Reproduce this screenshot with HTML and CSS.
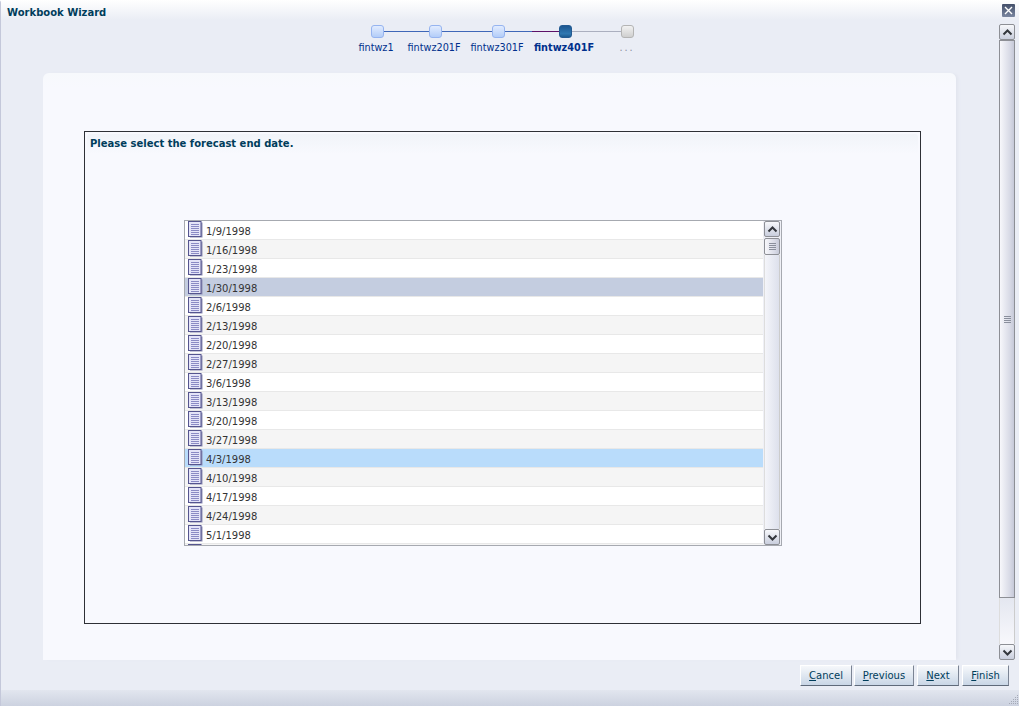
FILE: index.html
```html
<!DOCTYPE html>
<html lang="en">
<head>
<meta charset="utf-8">
<title>Workbook Wizard</title>
<link rel="stylesheet" href="styles.css">
</head>
<body>
<div class="dialog">
  <header class="titlebar">
    <h1 class="title">Workbook Wizard</h1>
    <button class="close" aria-label="Close">
      <svg width="13" height="13" viewBox="0 0 13 13"><path d="M3 3l7 7M10 3l-7 7" stroke="#fff" stroke-width="1.4" fill="none"/></svg>
    </button>
  </header>
  <div class="middle">
    <main class="content">
      <nav class="train">
        <div class="track">
          <span class="stop done"></span><span class="line l1 blue"></span>
          <span class="stop done"></span><span class="line l2 blue"></span>
          <span class="stop done"></span><span class="line l3 mixed"></span>
          <span class="stop current"></span><span class="line l4 grey"></span>
          <span class="stop todo"></span>
        </div>
        <div class="labels">
          <span class="label">fintwz1</span>
          <span class="label">fintwz201F</span>
          <span class="label">fintwz301F</span>
          <span class="label active">fintwz401F</span>
          <span class="label muted">...</span>
        </div>
      </nav>
      <section class="card">
        <div class="panel">
          <div class="prompt">Please select the forecast end date.</div>
          <div class="listbox">
            <ul class="rows">
              <li class="row"><svg class="doc" viewBox="0 0 15 17"><use href="#doc"/></svg>1/9/1998</li>
              <li class="row alt"><svg class="doc" viewBox="0 0 15 17"><use href="#doc"/></svg>1/16/1998</li>
              <li class="row"><svg class="doc" viewBox="0 0 15 17"><use href="#doc"/></svg>1/23/1998</li>
              <li class="row hover"><svg class="doc" viewBox="0 0 15 17"><use href="#doc"/></svg>1/30/1998</li>
              <li class="row"><svg class="doc" viewBox="0 0 15 17"><use href="#doc"/></svg>2/6/1998</li>
              <li class="row alt"><svg class="doc" viewBox="0 0 15 17"><use href="#doc"/></svg>2/13/1998</li>
              <li class="row"><svg class="doc" viewBox="0 0 15 17"><use href="#doc"/></svg>2/20/1998</li>
              <li class="row alt"><svg class="doc" viewBox="0 0 15 17"><use href="#doc"/></svg>2/27/1998</li>
              <li class="row"><svg class="doc" viewBox="0 0 15 17"><use href="#doc"/></svg>3/6/1998</li>
              <li class="row alt"><svg class="doc" viewBox="0 0 15 17"><use href="#doc"/></svg>3/13/1998</li>
              <li class="row"><svg class="doc" viewBox="0 0 15 17"><use href="#doc"/></svg>3/20/1998</li>
              <li class="row alt"><svg class="doc" viewBox="0 0 15 17"><use href="#doc"/></svg>3/27/1998</li>
              <li class="row selected"><svg class="doc" viewBox="0 0 15 17"><use href="#doc"/></svg>4/3/1998</li>
              <li class="row alt"><svg class="doc" viewBox="0 0 15 17"><use href="#doc"/></svg>4/10/1998</li>
              <li class="row"><svg class="doc" viewBox="0 0 15 17"><use href="#doc"/></svg>4/17/1998</li>
              <li class="row alt"><svg class="doc" viewBox="0 0 15 17"><use href="#doc"/></svg>4/24/1998</li>
              <li class="row"><svg class="doc" viewBox="0 0 15 17"><use href="#doc"/></svg>5/1/1998</li>
              <li class="row alt"><svg class="doc" viewBox="0 0 15 17"><use href="#doc"/></svg></li>
            </ul>
            <div class="sb small">
              <span class="sb-btn"><svg width="15" height="15" viewBox="0 0 15 15"><use href="#up"/></svg></span>
              <span class="sb-thumb mini"><svg width="11" height="11" viewBox="0 0 11 11"><use href="#grip"/></svg></span>
              <span class="sb-rest"></span>
              <span class="sb-btn"><svg width="15" height="15" viewBox="0 0 15 15"><use href="#down"/></svg></span>
            </div>
          </div>
        </div>
      </section>
    </main>
    <div class="sb page">
      <span class="sb-btn"><svg width="15" height="15" viewBox="0 0 15 15"><use href="#up"/></svg></span>
      <span class="sb-thumb big"><svg width="11" height="11" viewBox="0 0 11 11"><use href="#grip"/></svg></span>
      <span class="sb-rest"></span>
      <span class="sb-btn"><svg width="15" height="15" viewBox="0 0 15 15"><use href="#down"/></svg></span>
    </div>
  </div>
  <footer class="buttons">
    <button class="btn cancel"><u>C</u>ancel</button>
    <button class="btn previous"><u>P</u>revious</button>
    <button class="btn next"><u>N</u>ext</button>
    <button class="btn finish"><u>F</u>inish</button>
  </footer>
  <div class="statusbar">
    <svg width="12" height="12" viewBox="0 0 12 12" fill="#a4a9b6"><path d="M10 1h1v1h-1zM8 3h1v1H8zM10 3h1v1h-1zM6 5h1v1H6zM8 5h1v1H8zM10 5h1v1h-1zM4 7h1v1H4zM6 7h1v1H6zM8 7h1v1H8zM10 7h1v1h-1zM2 9h1v1H2zM4 9h1v1H4zM6 9h1v1H6zM8 9h1v1H8zM10 9h1v1h-1z"/></svg>
  </div>
</div>
<svg class="defs" width="0" height="0" aria-hidden="true">
  <symbol id="doc" viewBox="0 0 15 17">
    <rect x="2" y="1.5" width="12.5" height="15" fill="#8f90b4"/>
    <rect x=".5" y=".5" width="12.5" height="15" fill="#e4e4f8" stroke="#55558f"/>
    <path d="M3 3.5h8M3 5.5h8M3 7.5h8M3 9.5h8M3 11.5h8M3 13.5h8" stroke="#8a8ac4" fill="none"/>
  </symbol>
  <symbol id="up" viewBox="0 0 15 15"><path d="M3.5 9.5l4-4 4 4" stroke="#33363c" stroke-width="2" fill="none"/></symbol>
  <symbol id="down" viewBox="0 0 15 15"><path d="M3.5 5.5l4 4 4-4" stroke="#33363c" stroke-width="2" fill="none"/></symbol>
  <symbol id="grip" viewBox="0 0 11 11"><path d="M2 2.5h7M2 4.5h7M2 6.5h7M2 8.5h7" stroke="#8a8f9c" fill="none"/></symbol>
</svg>
</body>
</html>
```
FILE: styles.css
```css
* { box-sizing: border-box; }
html, body { margin: 0; height: 100%; }
body { font-family: "DejaVu Sans", Tahoma, sans-serif; font-size: 10px; color: #333; overflow: hidden; }
.defs { position: absolute; }
.dialog { width: 1019px; height: 706px; display: flex; flex-direction: column; background: #eaedf5; border-left: 1px solid #c4c8da; border-top-left-radius: 3px; }
.titlebar { height: 24px; flex: none; display: flex; justify-content: space-between; padding: 4px 4px 0 6px; background: linear-gradient(#fff, #eaedf5 20px); }
.title { margin: 0; font-size: 10px; line-height: 18px; font-weight: bold; color: #003d5b; }
.close { width: 13px; height: 13px; padding: 0; border: 0; background: linear-gradient(#44506a, #7a86a0); display: block; border-radius: 1px; }
.close svg { display: block; }
.middle { height: 636px; flex: none; display: flex; }
.content { width: 998px; flex: none; display: flex; flex-direction: column; }
.train { height: 49px; flex: none; padding-left: 347px; }
.track { display: flex; align-items: center; height: 15px; padding-left: 23px; }
.stop { width: 13px; height: 13px; flex: none; border-radius: 3px; border: 1px solid #96b4f0; background: linear-gradient(#e2ecff, #b3cdf8); }
.stop.current { border-color: #235a92; background: linear-gradient(#1c5690, #2f78b2 70%, #1c5a90); }
.stop.todo { border-color: #b4b4b4; background: linear-gradient(#f2f2f2, #cfcfcf); }
.line { height: 1px; flex: none; }
.l1 { width: 45px; }
.l2 { width: 50px; }
.l3 { width: 54px; }
.l4 { width: 49px; }
.blue { background: #3f67b8; }
.grey { background: #abafbf; }
.mixed { background: linear-gradient(90deg, #3f67b8 50%, #5c1168 50%); }
.labels { display: grid; grid-template-columns: 58px 58px 68px 66px 60px; margin: 2px 0 0 -1px; }
.label { text-align: center; color: #00308c; line-height: 14px; font-size: 9.7px; white-space: nowrap; }
.label.active { font-weight: bold; }
.label.muted { color: #8a8f9c; letter-spacing: 2px; }
.card { width: 913px; height: 587px; flex: none; margin-left: 42px; padding: 58px 35px 0 41px; background: linear-gradient(#f7f9fc, #f8f9fe 15px); border-radius: 6px 6px 0 0; box-shadow: 3px 0 3px -1px #e2e5ee; }
.panel { width: 837px; height: 493px; border: 1px solid #2e3036; padding: 2px; display: flex; flex-direction: column; }
.prompt { height: 20px; flex: none; padding: 3px 3px 0; font-weight: bold; font-size: 10px; line-height: 14px; color: #003d5b; background: linear-gradient(#f1f4f9, #f8f9fe); border-radius: 3px 3px 0 0; }
.listbox { width: 598px; height: 326px; margin: 66px 0 0 97px; flex: none; display: flex; border: 1px solid #a6a9b0; background: #fff; overflow: hidden; }
.rows { list-style: none; margin: 0; padding: 0; width: 578px; height: 324px; flex: none; overflow: hidden; }
.row { height: 19px; display: flex; align-items: flex-start; gap: 3px; padding-left: 3px; border-bottom: 1px solid #e8e8e8; line-height: 22px; color: #333; background: #fff; white-space: nowrap; }
.row.alt { background: #f5f5f5; }
.row.hover { background: #c4cde0; }
.row.selected { background: #b9dcfb; }
.doc { width: 15px; height: 17px; flex: none; }
.sb { display: flex; flex-direction: column; flex: none; }
.sb.page { width: 17px; padding: 0; }
.sb.small { width: 18px; background: #eff0f6; padding-left: 1px; }
.sb-btn { height: 16px; flex: none; width: 16px; border: 1px solid #8d8f95; border-radius: 2px; background: linear-gradient(#f7f8fb, #c9cedd); display: block; }
.sb-btn svg { display: block; }
.sb-thumb { width: 16px; flex: none; display: flex; align-items: center; justify-content: center; border: 1px solid #8d8f95; background: linear-gradient(90deg, #f7f7fb, #d8dae6 70%, #c6c9d8); }
.sb-thumb.mini { height: 17px; margin-top: 1px; border-radius: 2px; }
.sb-thumb.big { height: 558px; }
.sb-rest { flex: 1; width: 16px; background: linear-gradient(90deg, #f4f5fa, #dde0ec); border-left: 1px solid #ddd; border-right: 1px solid #ccc; }
.page .sb-rest { background: linear-gradient(#e4e7f0, #f8f8fc); }
.buttons { height: 30px; flex: none; display: flex; gap: 2px; padding: 5px 0 0 799px; }
.btn { height: 21px; padding: 0; font: 10px "DejaVu Sans", Tahoma, sans-serif; color: #003d5b; border: 1px solid #fff; border-right-color: #7b8494; border-bottom-color: #5f6a7a; background: linear-gradient(#f6f8fb, #c9d6e6); }
.cancel { width: 52px; }
.previous { width: 60px; }
.next { width: 42px; margin-left: 1px; }
.finish { width: 47px; margin-left: 1px; }
.statusbar { flex: 1; display: flex; justify-content: flex-end; align-items: flex-end; background: linear-gradient(#e2e6ef, #ccd2e0); }
```
